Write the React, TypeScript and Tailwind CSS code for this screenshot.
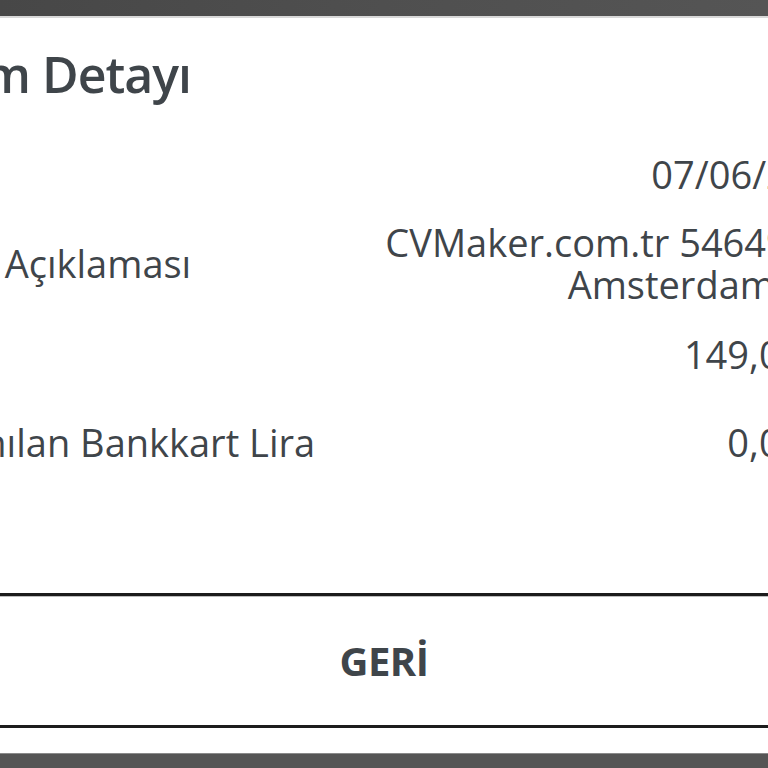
import React from 'react';

const rows = [
  { label: 'Tarih', value: ['07/06/2023'], mt: 'mt-[48px]' },
  { label: 'İşlem Açıklaması', value: ['CVMaker.com.tr 54649531', 'Amsterdam\u00a0\u00a0\u00a0NL'], mt: 'mt-[25px]' },
  { label: 'Tutar', value: ['149,00 TL'], mt: 'mt-[27px]' },
  { label: 'Kazanılan Bankkart Lira', value: ['0,00 TL'], mt: 'mt-[44px]' },
];

export default function App() {
  return (
    <div className="w-[768px] h-[768px] overflow-hidden bg-[#505050] flex flex-col font-['Open_Sans',sans-serif] text-[#3f454a]">
      <div className="h-[16px] shrink-0 bg-gradient-to-r from-[#474747] via-[#4f4f4f] to-[#555555]" />
      <div className="h-[2px] shrink-0 bg-[#d8d8d8]" />

      <div className="flex-1 bg-white flex flex-col">
        {/* content runs past both edges of the view */}
        <div className="-ml-[100px] -mr-[85px]">
          <h1 className="ml-[5px] mt-[26px] h-[60px] leading-[60px] text-[50px] font-semibold tracking-[-1px]">
            İşlem Detayı
          </h1>

          {rows.map(r => (
            <div key={r.label} className={`flex items-center justify-between ${r.mt}`}>
              <span className="text-[38px] leading-[44px] whitespace-nowrap">{r.label}</span>
              <div className="text-right text-[38px] leading-[42px] font-medium whitespace-nowrap">
                {r.value.map(v => <div key={v}>{v}</div>)}
              </div>
            </div>
          ))}
        </div>

        <div className="mt-auto border-t-[3px] border-[#1c1c1c]">
          <div className="border-t border-[#bdbdbd]" />
          <button className="w-full h-[128px] flex items-center justify-center text-[40px] font-bold text-[#3f454a] tracking-[-0.5px]">
            GERİ
          </button>
        </div>
        <div className="border-t-[3px] border-[#1c1c1c] h-[28px]" />
      </div>

      <div className="h-[15px] shrink-0 bg-[#555555] border-t border-[#8a8a8a]" />
    </div>
  );
}
